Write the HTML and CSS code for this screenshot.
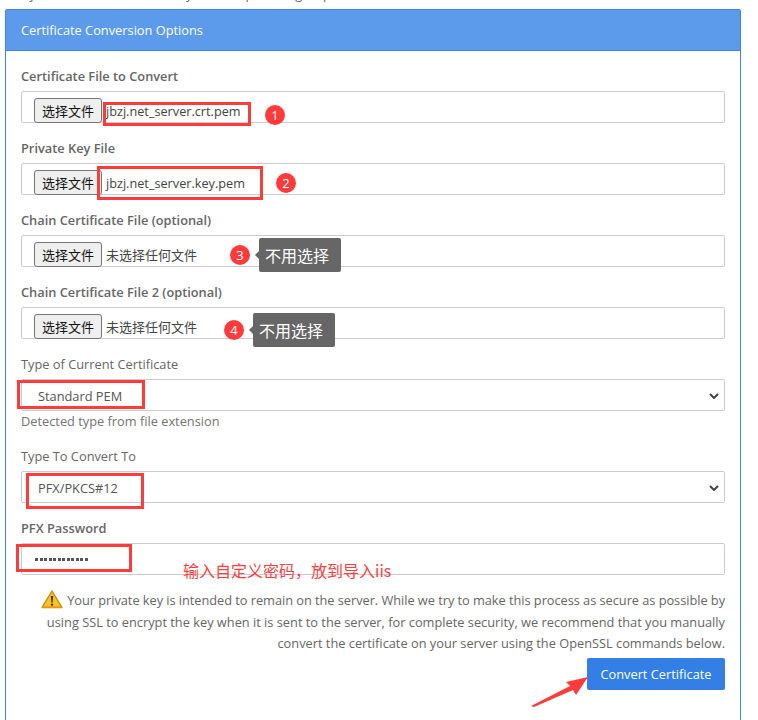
FILE: index.html
```html
<!DOCTYPE html>
<html lang="en">
<head>
<meta charset="utf-8">
<title>Certificate Conversion Options</title>
<link rel="stylesheet" href="styles.css">
</head>
<body>
<div class="canvas">
  <div class="cut-line"><span>By default the tool will load your file up to the group</span></div>
  <section class="panel">
    <h2 class="panel-heading">Certificate Conversion Options</h2>
    <div class="panel-body">
      <div class="group">
        <label class="label strong">Certificate File to Convert</label>
        <div class="control file"><button class="file-btn" type="button">选择文件</button><span class="file-name">jbzj.net_server.crt.pem</span></div>
      </div>
      <div class="group">
        <label class="label strong">Private Key File</label>
        <div class="control file"><button class="file-btn" type="button">选择文件</button><span class="file-name">jbzj.net_server.key.pem</span></div>
      </div>
      <div class="group">
        <label class="label strong">Chain Certificate File (optional)</label>
        <div class="control file"><button class="file-btn" type="button">选择文件</button><span class="file-name empty">未选择任何文件</span></div>
      </div>
      <div class="group">
        <label class="label strong">Chain Certificate File 2 (optional)</label>
        <div class="control file"><button class="file-btn" type="button">选择文件</button><span class="file-name empty">未选择任何文件</span></div>
      </div>
      <div class="group group-help">
        <label class="label">Type of Current Certificate</label>
        <div class="control select"><span>Standard PEM</span><svg class="chev" viewBox="0 0 10 6" width="10" height="6"><path d="M1 1l4 4 4-4" fill="none" stroke="#444" stroke-width="2"/></svg></div>
        <p class="help">Detected type from file extension</p>
      </div>
      <div class="group">
        <label class="label">Type To Convert To</label>
        <div class="control select"><span>PFX/PKCS#12</span><svg class="chev" viewBox="0 0 10 6" width="10" height="6"><path d="M1 1l4 4 4-4" fill="none" stroke="#444" stroke-width="2"/></svg></div>
      </div>
      <div class="group">
        <label class="label strong">PFX Password</label>
        <div class="control password"><span class="dots" aria-label="password"><i></i><i></i><i></i><i></i><i></i><i></i><i></i><i></i><i></i><i></i><i></i><i></i></span></div>
      </div>
      <p class="warning"><svg class="warn-icon" viewBox="0 0 22 19" width="22" height="19"><path d="M11 1L1 17.5h20z" fill="#f7c51b" stroke="#c98a10" stroke-width="1.4" stroke-linejoin="round"/><path d="M1.6 16.6h18.8L21 18H1z" fill="#ee9312"/><path d="M9.9 6h2.2l-.5 6.5h-1.2z" fill="#3a2c10"/><circle cx="11" cy="14.6" r="1.2" fill="#3a2c10"/></svg> Your private key is intended to remain on the server. While we try to make this process as secure as possible by using SSL to encrypt the key when it is sent to the server, for complete security, we recommend that you manually convert the certificate on your server using the OpenSSL commands below.</p>
      <div class="actions"><button class="submit" type="button">Convert Certificate</button></div>
    </div>
  </section>

  <div class="mark m1"></div>
  <div class="mark m2"></div>
  <div class="mark m3"></div>
  <div class="mark m4"></div>
  <div class="mark m5"></div>
  <div class="num n1">1</div>
  <div class="num n2">2</div>
  <div class="num n3">3</div>
  <div class="num n4">4</div>
  <div class="tip t3">不用选择</div>
  <div class="tip t4">不用选择</div>
  <div class="note">输入自定义密码，放到导入iis</div>
  <svg class="arrow" viewBox="0 0 60 32" width="60" height="32"><path d="M0 29L39 9l-4-4L57 0 45 18l-3-5L3 30z" fill="#ff3b3b"/></svg>
</div>
</body>
</html>
```
FILE: styles.css
```css
* { box-sizing: border-box; }
html, body { margin: 0; padding: 0; background: #fff; }
body { font-family: "Open Sans", "Noto Sans CJK SC", sans-serif; font-size: 12.8px; color: #666; }
.canvas { position: relative; width: 758px; height: 720px; overflow: hidden; }
.cut-line { height: 9px; padding-left: 21px; overflow: hidden; display: flex; align-items: flex-end; white-space: nowrap; }
.cut-line span { line-height: 18px; flex: none; color: #666; position: relative; top: -6.5px; }
.panel { margin-left: 5px; width: 736px; height: 760px; border: 1px solid #3f83e4; border-radius: 2px 2px 0 0; }
.panel-heading { margin: 0; height: 41px; padding: 0 15px; background: #5c9aeb; border-bottom: 1px solid #3f83e4; color: #fff; font-size: 12.8px; font-weight: 400; line-height: 40px; }
.panel-body { padding: 15px 15px 0; }
.group { height: 72px; }
.group-help { height: 92px; }
.label { display: block; height: 25px; padding-top: 1px; line-height: 18px; color: #666; font-weight: 400; }
.strong { font-weight: 600; }
.control { height: 32px; border: 1px solid #ccc; border-radius: 2px; display: flex; align-items: center; background: #fff; color: #555; }
.file { padding: 6px 0 0 12px; align-items: flex-start; }
.file-btn { width: 68px; height: 25px; padding: 0; margin: 0; background: #efefef; border: 1px solid #767676; border-radius: 3px; font-family: "Noto Sans CJK SC", sans-serif; font-size: 13px; line-height: 21px; color: #111; }
.file-name { margin-left: 4px; line-height: 27px; color: #444; font-size: 12.7px; }
.empty { font-size: 13px; }
.select { padding: 1px 5px 0 16px; justify-content: space-between; color: #555; }
.help { margin: 1px 0 0; line-height: 18px; color: #737373; }
.password { padding-left: 13px; }
.dots { display: flex; gap: 1.5px; }
.dots i { width: 3px; height: 3px; background: #555; }
.warning { margin: 0; width: 704px; text-align: right; line-height: 21.5px; color: #666; }
.warning::first-line { letter-spacing: -0.04px; }
.warn-icon { vertical-align: -4px; margin-right: 1px; }
.actions { display: flex; justify-content: flex-end; margin-top: 3px; }
.submit { width: 138px; height: 32px; background: #337fe6; border: 0; border-radius: 2px; color: #fff; font: 400 12.8px "Open Sans", sans-serif; padding: 0; }
.mark { position: absolute; border: 3px solid #ff3b3b; }
.m1 { left: 103px; top: 102px; width: 148px; height: 24px; }
.m2 { left: 97px; top: 166px; width: 166px; height: 34px; }
.m3 { left: 17px; top: 380px; width: 128px; height: 29px; }
.m4 { left: 26px; top: 473px; width: 118px; height: 36px; }
.m5 { left: 16px; top: 544px; width: 116px; height: 28px; }
.num { position: absolute; width: 20px; height: 20px; border-radius: 50%; background: #ff3b3b; color: #fff; text-align: center; font: 400 13px/20px "Open Sans", sans-serif; }
.n1 { left: 265px; top: 105px; }
.n2 { left: 276px; top: 173px; }
.n3 { left: 230px; top: 245px; }
.n4 { left: 224px; top: 320px; }
.tip { position: absolute; width: 82px; height: 34px; padding-right: 6px; background: #666; border-radius: 2px; color: #fff; font: 400 16px/34px "Noto Sans CJK SC", sans-serif; text-align: center; }
.tip::before { content: ""; position: absolute; left: -4px; top: 13px; border: 4px solid transparent; border-left: 0; border-right-color: #666; }
.t3 { left: 259px; top: 238px; }
.t4 { left: 253px; top: 313px; }
.note { position: absolute; left: 183px; top: 559px; color: #ff4040; font: 400 16px/22px "Noto Sans CJK SC", sans-serif; white-space: nowrap; }
.arrow { position: absolute; left: 531px; top: 677px; }
```
